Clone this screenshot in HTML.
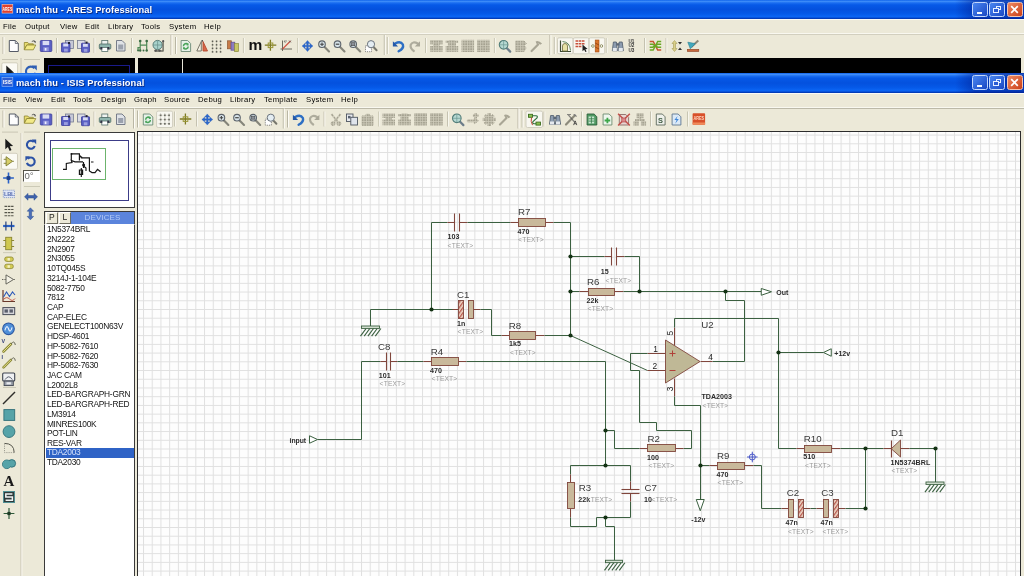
<!DOCTYPE html>
<html><head><meta charset="utf-8"><title>mach thu - ISIS Professional</title>
<style>
html,body{margin:0;padding:0;}
body{width:1024px;height:576px;overflow:hidden;background:#ece9d8;position:relative;font-family:"Liberation Sans",sans-serif;}
.abs{position:absolute;}
.title{position:absolute;left:0;width:1024px;height:19px;background:linear-gradient(to right,rgba(0,20,130,0) 0,rgba(0,20,130,0) 955px,rgba(0,20,130,.45) 975px,rgba(0,20,130,.5) 1024px),linear-gradient(#0c60ea 0%,#3f8ef9 7%,#1b6ef1 15%,#0659e7 26%,#0451de 50%,#0559e8 72%,#0b65f4 87%,#0852da 93%,#0030a6 100%);}
.title .t{position:absolute;left:16px;top:4.6px;font-size:9.3px;font-weight:bold;color:#fff;white-space:nowrap;letter-spacing:0.1px;text-shadow:0.8px 0.8px 0 #0a2a80;}
.menu{position:absolute;left:0;width:1024px;background:#ece9d8;}
.menu span{position:absolute;top:3.2px;font-size:7.7px;letter-spacing:0.28px;color:#000;white-space:nowrap;}
.m1 span{top:2.75px;}
.m2 span{top:2.45px;}
.wb{position:absolute;top:1.8px;width:15.6px;height:15.6px;border:1px solid #c4d8fc;border-radius:2.5px;box-sizing:border-box;}
.list div{position:absolute;left:1.9px;font-size:8.4px;letter-spacing:-0.26px;color:#151515;white-space:nowrap;height:10px;line-height:10px;}
body>*{will-change:transform;}
svg text{font-family:"Liberation Sans",sans-serif;}
</style></head>
<body>
<div class="title" style="top:-0.25px"><span class="t">mach thu - ARES Professional</span><div class="wb" style="left:972.2px;background:linear-gradient(135deg,#4a86f0,#1a48c4)"><i class="abs" style="left:3.4px;top:8.8px;width:5.2px;height:2.2px;background:#f4f8ff"></i></div><div class="wb" style="left:989.4px;background:linear-gradient(135deg,#4a86f0,#1a48c4)"><i class="abs" style="left:5.6px;top:3px;width:5.4px;height:4.6px;border:1px solid #e8f0ff;border-top-width:1.6px;box-sizing:border-box"></i><i class="abs" style="left:3px;top:5.6px;width:5.4px;height:4.6px;border:1px solid #e8f0ff;border-top-width:1.6px;box-sizing:border-box;background:#2a5cd4"></i></div><div class="wb" style="left:1007px;border-color:#f4c4b0;background:linear-gradient(135deg,#ee8a62,#cc4018)"><svg class="abs" style="left:0;top:0" width="13" height="13"><path d="M3.2 3.2 L9.8 9.8 M9.8 3.2 L3.2 9.8" stroke="#fff" stroke-width="1.7"/></svg></div></div>
<div class="menu m1" style="top:18.75px;height:15.25px"><i class="abs" style="left:0;top:0.3px;width:1024px;height:1.1px;background:#fbfaf6"></i>
<span style="left:3px">File</span><span style="left:25px">Output</span><span style="left:60px">View</span><span style="left:85px">Edit</span><span style="left:108px">Library</span><span style="left:141px">Tools</span><span style="left:169px">System</span><span style="left:204px">Help</span>
</div>
<div class="abs" style="left:0;top:32.8px;width:1024px;height:1px;background:#f9f8f0"></div><div class="abs" style="left:0;top:33.8px;width:1024px;height:0.9px;background:#d2cfbf"></div>
<div class="abs" style="left:0;top:58px;width:1021px;height:15px;background:#000"></div>
<div class="abs" style="left:0;top:58px;width:44px;height:15px;background:#ece9d8"></div>
<div class="abs" style="left:134.6px;top:58px;width:3.2px;height:15px;background:#ece9d8"></div>
<div class="abs" style="left:182px;top:59px;width:1px;height:14px;background:#e8e6da"></div>
<div class="abs" style="left:48px;top:65px;width:82px;height:8px;border:1px solid #1a1a8a;border-bottom:none;box-sizing:border-box"></div>
<svg class="abs" style="left:0;top:58px" width="44" height="15" viewBox="0 58 44 15"><rect x="1.8" y="62.8" width="15.8" height="12" rx="1.5" fill="#fbfaf4" stroke="#c9c5b4" stroke-width="0.8"/><g transform="translate(9.5,71.5)"><path d="M-3.2 -6 L-3.2 4.6 L-0.6 2.2 L1.2 6.2 L3 5.4 L1.3 1.5 L4.6 1.3 Z" fill="#1c1c1c"/></g><g transform="translate(30.8,71.2)"><path d="M3.6 -3 A4.8 4.8 0 1 0 4.6 1.6" fill="none" stroke="#2f5fb4" stroke-width="2.1"/><path d="M1 -5.8 H6 V-0.6 Z" fill="#2f5fb4"/></g></svg>
<div class="title" style="top:73px;height:19.75px"><span class="t">mach thu - ISIS Professional</span><div class="wb" style="left:972.2px;background:linear-gradient(135deg,#4a86f0,#1a48c4)"><i class="abs" style="left:3.4px;top:8.8px;width:5.2px;height:2.2px;background:#f4f8ff"></i></div><div class="wb" style="left:989.4px;background:linear-gradient(135deg,#4a86f0,#1a48c4)"><i class="abs" style="left:5.6px;top:3px;width:5.4px;height:4.6px;border:1px solid #e8f0ff;border-top-width:1.6px;box-sizing:border-box"></i><i class="abs" style="left:3px;top:5.6px;width:5.4px;height:4.6px;border:1px solid #e8f0ff;border-top-width:1.6px;box-sizing:border-box;background:#2a5cd4"></i></div><div class="wb" style="left:1007px;border-color:#f4c4b0;background:linear-gradient(135deg,#ee8a62,#cc4018)"><svg class="abs" style="left:0;top:0" width="13" height="13"><path d="M3.2 3.2 L9.8 9.8 M9.8 3.2 L3.2 9.8" stroke="#fff" stroke-width="1.7"/></svg></div></div>
<div class="menu m2" style="top:92.75px;height:15.25px"><i class="abs" style="left:0;top:0.3px;width:1024px;height:1.1px;background:#fbfaf6"></i>
<span style="left:3px">File</span><span style="left:25px">View</span><span style="left:51px">Edit</span><span style="left:73px">Tools</span><span style="left:101px">Design</span><span style="left:134px">Graph</span><span style="left:164px">Source</span><span style="left:198px">Debug</span><span style="left:230px">Library</span><span style="left:264px">Template</span><span style="left:306px">System</span><span style="left:341px">Help</span>
</div>
<div class="abs" style="left:0;top:106.9px;width:1024px;height:1px;background:#f9f8f0"></div><div class="abs" style="left:0;top:107.9px;width:1024px;height:1px;background:#bcb9a8"></div>
<!-- canvas -->
<div class="abs" id="canvas" style="left:137px;top:131px;width:884.2px;height:445px;background-color:#fdfdfd;border-left:1.5px solid #2c2c2c;border-top:1.5px solid #2c2c2c;border-right:1.3px solid #2c2c2c;box-sizing:border-box;overflow:hidden">
<svg class="abs" style="left:-138.5px;top:-132.5px" width="1024" height="576" viewBox="0 0 1024 576">
<defs><pattern id="gridp" x="143" y="134.6" width="8.72" height="8.72" patternUnits="userSpaceOnUse"><path d="M0.5 0 V8.72 M0 0.5 H8.72" stroke="#e0e0e0" stroke-width="1" fill="none"/></pattern></defs>
<rect x="138" y="132" width="883" height="444" fill="url(#gridp)"/>
</svg>
</div>
<!-- overview + device panel -->
<div class="abs" style="left:44px;top:131.5px;width:91px;height:76px;background:#fff;border:1px solid #3a3a3a;box-sizing:border-box"></div>
<div class="abs" style="left:50px;top:139.5px;width:79px;height:61px;border:1px solid #3c3c88;box-sizing:border-box"></div>
<div class="abs" style="left:51.8px;top:147.5px;width:54.2px;height:32px;border:1px solid #6cb46c;box-sizing:border-box"></div>
<div class="abs" style="left:44px;top:210.5px;width:91px;height:14px;background:#ece9d8;border:1px solid #3a3a3a;border-bottom:none;box-sizing:border-box"></div>
<div class="abs" style="left:46px;top:212px;width:11.5px;height:11.5px;background:#ece9d8;border:1px solid #fff;border-right-color:#6e6c60;border-bottom-color:#6e6c60;box-sizing:border-box;font-size:8.5px;line-height:9.5px;text-align:center;color:#222">P</div>
<div class="abs" style="left:58.5px;top:212px;width:11.5px;height:11.5px;background:#ece9d8;border:1px solid #fff;border-right-color:#6e6c60;border-bottom-color:#6e6c60;box-sizing:border-box;font-size:8.5px;line-height:9.5px;text-align:center;color:#222">L</div>
<div class="abs" style="left:71px;top:211.5px;width:63px;height:12.5px;background:#5b84dc;color:#b4cbf6;font-size:8px;line-height:12.5px;text-align:center;letter-spacing:0.1px">DEVICES</div>
<div class="abs list" style="left:44px;top:224px;width:91px;height:353px;background:#fff;border:1px solid #3a3a3a;border-top-color:#fff;box-sizing:border-box"><div style="top:-0.70px">1N5374BRL</div><div style="top:9.01px">2N2222</div><div style="top:18.72px">2N2907</div><div style="top:28.43px">2N3055</div><div style="top:38.14px">10TQ045S</div><div style="top:47.85px">3214J-1-104E</div><div style="top:57.56px">5082-7750</div><div style="top:67.27px">7812</div><div style="top:76.98px">CAP</div><div style="top:86.69px">CAP-ELEC</div><div style="top:96.40px">GENELECT100N63V</div><div style="top:106.11px">HDSP-4601</div><div style="top:115.82px">HP-5082-7610</div><div style="top:125.53px">HP-5082-7620</div><div style="top:135.24px">HP-5082-7630</div><div style="top:144.95px">JAC CAM</div><div style="top:154.66px">L2002L8</div><div style="top:164.37px">LED-BARGRAPH-GRN</div><div style="top:174.08px">LED-BARGRAPH-RED</div><div style="top:183.79px">LM3914</div><div style="top:193.50px">MINRES100K</div><div style="top:203.21px">POT-LIN</div><div style="top:212.92px">RES-VAR</div><div style="left:0.5px;top:223.33px;width:88.6px;height:9.4px;line-height:9.2px;background:#2f63c6;color:#d6e2fb;padding-left:1.4px;box-sizing:border-box">TDA2003</div><div style="top:232.34px">TDA2030</div></div>
<!-- angle box -->
<div class="abs" style="left:22.8px;top:170.4px;width:17.2px;height:11.6px;background:#fff;border:1px solid #55534a;border-right-color:#fff;border-bottom-color:#fff;box-sizing:border-box;font-size:9.6px;line-height:10px;color:#666;padding-left:0.5px">0&deg;</div>
<!-- chrome icons -->
<svg class="abs" style="left:0;top:0" width="1024" height="576" viewBox="0 0 1024 576">
<defs><pattern id="ck" width="2.5" height="2.5" patternUnits="userSpaceOnUse"><rect width="2.5" height="2.5" fill="#a5a291"/><rect x="0" y="0" width="0.7" height="2.5" fill="#cfccbb"/><rect x="0" y="0" width="2.5" height="0.7" fill="#cfccbb"/></pattern></defs>
<rect x="2.5" y="37" width="1" height="17" fill="#b9b6a4"/><rect x="3.5" y="37" width="1" height="17" fill="#fdfcf6"/>
<g transform="translate(8.80,40.00)"><path d="M0.5 0.5 H6.5 L9.5 3.5 V11.5 H0.5 Z" fill="#fdfdfd" stroke="#555a66" stroke-width="1"/><path d="M6.5 0.5 V3.5 H9.5" fill="none" stroke="#555a66" stroke-width="0.8"/></g>
<g transform="translate(23.80,40.00)"><path d="M0.5 2.5 H4 L5 3.8 H9.5 V5 H3 L0.5 9.5 Z" fill="#e9dd72" stroke="#8d8430" stroke-width="0.8"/><path d="M3 5 H12 L9.5 9.8 H0.5 Z" fill="#f2e987" stroke="#8d8430" stroke-width="0.8"/><path d="M8 1.5 Q10 0 11.5 1.5 M11.5 1.5 l-1.6 -0.2 M11.5 1.5 l-0.2 1.6" stroke="#444" stroke-width="0.8" fill="none"/></g>
<g transform="translate(39.80,40.00)"><rect x="0.5" y="0.5" width="11.5" height="11" rx="0.8" fill="#5a5fc4" stroke="#3d3f9a" stroke-width="0.8"/><rect x="2.8" y="0.9" width="6.6" height="4.2" fill="#d9dcf3"/><rect x="3.5" y="7.2" width="5.5" height="4" fill="#8f93dc"/><rect x="5" y="8" width="1.6" height="2.6" fill="#eef"/></g>
<g transform="translate(61.00,40.00)"><rect x="4.5" y="0.5" width="8" height="8" fill="#c7c9d6" stroke="#777c92" stroke-width="0.8"/><rect x="0.5" y="3" width="8.5" height="9" rx="0.6" fill="#5a5fc4" stroke="#3d3f9a" stroke-width="0.8"/><rect x="2.2" y="3.5" width="5" height="3" fill="#d9dcf3"/><rect x="3" y="8.6" width="3.8" height="3" fill="#9a9ee0"/><rect x="7" y="2" width="2" height="2" fill="#223"/></g>
<g transform="translate(77.00,40.00)"><rect x="0.5" y="0.5" width="7.5" height="8" fill="#dcdde6" stroke="#777c92" stroke-width="0.8"/><rect x="4.5" y="3.2" width="8" height="9" rx="0.6" fill="#5a5fc4" stroke="#3d3f9a" stroke-width="0.8"/><rect x="6" y="3.8" width="4.8" height="3" fill="#d9dcf3"/><rect x="6.8" y="8.8" width="3.6" height="3" fill="#9a9ee0"/><rect x="8.6" y="1.6" width="2" height="2" fill="#223"/></g>
<g transform="translate(98.80,40.00)"><rect x="3" y="0.5" width="6" height="4" fill="#eef3f1" stroke="#55706c" stroke-width="0.8"/><rect x="0.5" y="4" width="11.5" height="5" rx="1" fill="#8fb5ae" stroke="#4c6b66" stroke-width="0.8"/><rect x="3" y="7.5" width="6" height="4" fill="#fff" stroke="#55706c" stroke-width="0.8"/><rect x="1.5" y="7" width="2" height="2.4" fill="#334"/><rect x="8.6" y="7" width="2" height="2.4" fill="#334"/></g>
<g transform="translate(116.00,40.00)"><path d="M0.5 0.5 H6 L9 3.5 V11 H0.5 Z" fill="#dfe2e6" stroke="#6c7280" stroke-width="0.9"/><rect x="2.2" y="4.5" width="5" height="5" fill="#9ba1ad"/></g>
<rect x="56.0" y="38" width="1" height="15" fill="#c5c2b0"/><rect x="57.0" y="38" width="0.8" height="15" fill="#fbfaf4"/>
<rect x="93.5" y="38" width="1" height="15" fill="#c5c2b0"/><rect x="94.5" y="38" width="0.8" height="15" fill="#fbfaf4"/>
<rect x="131.0" y="38" width="1" height="15" fill="#c5c2b0"/><rect x="132.0" y="38" width="0.8" height="15" fill="#fbfaf4"/>
<g transform="translate(137.20,39.70)"><g stroke="#4e8a55" stroke-width="1.2" fill="none"><path d="M3 1 V11 M9.5 1 V11 M3 5.5 H9.5 M0.8 11 V8 H3"/></g><g fill="#3c6c44"><circle cx="3" cy="1.3" r="1.3"/><circle cx="9.5" cy="1.3" r="1.3"/><circle cx="3" cy="10.8" r="1.2"/><circle cx="9.5" cy="10.8" r="1.2"/><circle cx="0.9" cy="10.8" r="1"/><circle cx="6.3" cy="10.8" r="1"/></g></g>
<g transform="translate(152.60,40.00)"><circle cx="5" cy="5" r="4.6" fill="#a8d2cc" stroke="#557a76" stroke-width="1"/><path d="M5 0.5 V9.5 M0.5 5 H9.5" stroke="#6d958f" stroke-width="0.8"/><path d="M10.5 1 V11 M2 11 H11" stroke="#6a6a60" stroke-width="1.4"/><circle cx="3" cy="10.6" r="1.2" fill="#555"/><circle cx="7" cy="10.6" r="1.2" fill="#555"/><circle cx="10.6" cy="1.2" r="1.1" fill="#555"/></g>
<rect x="170.5" y="35" width="1" height="20" fill="#b9b6a4"/><rect x="171.5" y="35" width="1" height="20" fill="#fdfcf6"/>
<rect x="175" y="37" width="1" height="17" fill="#b9b6a4"/><rect x="176" y="37" width="1" height="17" fill="#fdfcf6"/>
<g transform="translate(180.60,40.00)"><path d="M0.5 0.5 H7 L10 3.5 V11.5 H0.5 Z" fill="#e6f1e8" stroke="#6c8a76" stroke-width="0.9"/><path d="M2.8 6.2 A2.6 2.6 0 0 1 7.4 4.6 M7.6 6.4 A2.6 2.6 0 0 1 3 8" stroke="#49a45a" stroke-width="1.5" fill="none"/><path d="M7.9 3.2 V5.4 H5.8 Z M2.4 9.4 V7.2 H4.6 Z" fill="#49a45a"/></g>
<g transform="translate(196.00,40.00)"><path d="M5.3 1.5 V11 H0.8 Z" fill="#f4f1e4" stroke="#6d6a5c" stroke-width="0.9"/><path d="M7 1.5 V11 H11.5 Z" fill="#d8684a" stroke="#b4492f" stroke-width="0.9"/><rect x="5.6" y="0" width="1.2" height="1.6" fill="#333"/></g>
<g transform="translate(211.50,40.00)"><rect x="0.30000000000000004" y="0.6000000000000001" width="1.5" height="1.5" fill="#4d4d46"/><rect x="0.30000000000000004" y="4.1" width="1.5" height="1.5" fill="#4d4d46"/><rect x="0.30000000000000004" y="7.6000000000000005" width="1.5" height="1.5" fill="#4d4d46"/><rect x="0.30000000000000004" y="11.100000000000001" width="1.5" height="1.5" fill="#4d4d46"/><rect x="4.3" y="0.6000000000000001" width="1.5" height="1.5" fill="#4d4d46"/><rect x="4.3" y="4.1" width="1.5" height="1.5" fill="#4d4d46"/><rect x="4.3" y="7.6000000000000005" width="1.5" height="1.5" fill="#4d4d46"/><rect x="4.3" y="11.100000000000001" width="1.5" height="1.5" fill="#4d4d46"/><rect x="8.3" y="0.6000000000000001" width="1.5" height="1.5" fill="#4d4d46"/><rect x="8.3" y="4.1" width="1.5" height="1.5" fill="#4d4d46"/><rect x="8.3" y="7.6000000000000005" width="1.5" height="1.5" fill="#4d4d46"/><rect x="8.3" y="11.100000000000001" width="1.5" height="1.5" fill="#4d4d46"/><path d="M1 0.5 V12 M5 0.5 V12 M9 0.5 V12" stroke="#8a887a" stroke-width="0.5" stroke-dasharray="1 1"/></g>
<g transform="translate(227.00,40.00)"><rect x="0.5" y="0.8" width="3.8" height="8" fill="#c87c48" stroke="#8d5630" stroke-width="0.7"/><rect x="4" y="2.2" width="3.8" height="8" fill="#8d7cc0" stroke="#5d4f90" stroke-width="0.7"/><rect x="7.6" y="3.6" width="3.8" height="8" fill="#c9c764" stroke="#8b8a3c" stroke-width="0.7"/></g>
<rect x="242.9" y="38" width="1" height="15" fill="#c5c2b0"/><rect x="243.9" y="38" width="0.8" height="15" fill="#fbfaf4"/>
<g transform="translate(249.00,40.00)"><text x="-0.5" y="9.7" font-size="15.5" font-weight="bold" fill="#111">m</text></g>
<g transform="translate(264.80,39.20)"><path d="M5.6 0.5 V11.5 M0 6 H11.5" stroke="#7d7a22" stroke-width="1.3"/><rect x="3.4" y="3.8" width="4.6" height="4.6" fill="none" stroke="#9a9636" stroke-width="1"/></g>
<g transform="translate(280.00,40.00)"><path d="M2.5 0.5 V11 M0.5 9 H12" stroke="#5c5a50" stroke-width="0.9"/><path d="M2.5 9 L10.5 1" stroke="#d05040" stroke-width="1.1"/><path d="M4 1 h3 M4 1 l1.5 2 M9 0.5 l2 2 M11 0.5 l-2 2" stroke="#555" stroke-width="0.6"/></g>
<rect x="297.3" y="38" width="1" height="15" fill="#c5c2b0"/><rect x="298.3" y="38" width="0.8" height="15" fill="#fbfaf4"/>
<g transform="translate(302.00,40.20)"><path d="M5.5 0.2 L8.1 3.3 H6.3 V5 H8 V3.2 L11 5.8 L8 8.4 V6.6 H6.3 V8.3 H8.1 L5.5 11.4 L2.9 8.3 H4.7 V6.6 H3 V8.4 L0 5.8 L3 3.2 V5 H4.7 V3.3 H2.9 Z" fill="#2c68cc" stroke="#2457b0" stroke-width="0.3"/></g>
<g transform="translate(318.00,40.20)"><path d="M6.6 6.8 L11 11.2" stroke="#85857a" stroke-width="2.1" stroke-linecap="round"/><circle cx="4" cy="4" r="3.3" fill="#d7e4ea" stroke="#5c636b" stroke-width="1.1"/><path d="M2.2 4 H5.8 M4 2.2 V5.8" stroke="#444" stroke-width="1.1"/></g>
<g transform="translate(333.50,40.20)"><path d="M6.6 6.8 L11 11.2" stroke="#85857a" stroke-width="2.1" stroke-linecap="round"/><circle cx="4" cy="4" r="3.3" fill="#d7e4ea" stroke="#5c636b" stroke-width="1.1"/><path d="M2.2 4 H5.8" stroke="#444" stroke-width="1.2"/></g>
<g transform="translate(349.20,40.20)"><path d="M6.6 6.8 L11 11.2" stroke="#85857a" stroke-width="2.1" stroke-linecap="round"/><circle cx="4" cy="4" r="3.3" fill="#d7e4ea" stroke="#5c636b" stroke-width="1.1"/><rect x="2.3" y="2.5" width="3.4" height="3" fill="#8a8f98" stroke="#444" stroke-width="0.6"/></g>
<g transform="translate(365.00,40.20)"><rect x="0.5" y="5.5" width="6" height="6" fill="#fff" stroke="#555" stroke-width="0.7" stroke-dasharray="1.2 1"/><path d="M8.5 6.8 L11.6 10" stroke="#77776c" stroke-width="2" stroke-linecap="round"/><circle cx="6" cy="4" r="3.6" fill="#e4edf2" stroke="#6b737c" stroke-width="1"/></g>
<rect x="383.8" y="35" width="1" height="20" fill="#b9b6a4"/><rect x="384.8" y="35" width="1" height="20" fill="#fdfcf6"/>
<rect x="386.8" y="37" width="1" height="17" fill="#b9b6a4"/><rect x="387.8" y="37" width="1" height="17" fill="#fdfcf6"/>
<g transform="translate(392.60,40.00)"><path d="M2.5 3.5 Q8 0.5 10.3 4.5 Q11.5 8.5 6 11.3" fill="none" stroke="#2e6fc4" stroke-width="2.4" stroke-linecap="round"/><path d="M0.3 1.2 V6.4 H5.5 Z" fill="#2559a8"/></g>
<g transform="translate(409.20,40.00)"><path d="M8.5 3.5 Q3.5 0.8 1.5 4.8 Q0.8 8.4 4.6 11" fill="none" stroke="#aeac9d" stroke-width="2.2" stroke-linecap="round"/><path d="M10.8 1.2 V6.4 H5.6 Z" fill="#a9a798"/></g>
<rect x="425.1" y="38" width="1" height="15" fill="#c5c2b0"/><rect x="426.1" y="38" width="0.8" height="15" fill="#fbfaf4"/>
<g transform="translate(430.60,40.00)"><g fill="url(#ck)" stroke="url(#ck)"><rect x="0" y="0.5" width="11.5" height="3.4"/><rect x="3" y="3.9" width="5.5" height="2.6"/><rect x="0" y="6.5" width="11.5" height="4.8"/></g></g>
<g transform="translate(446.20,40.00)"><g fill="url(#ck)" stroke="url(#ck)"><rect x="3.2" y="0.5" width="5" height="3"/><rect x="0" y="1" width="3.2" height="1.5"/><rect x="8.2" y="1" width="3.2" height="1.5"/><rect x="2.2" y="3.5" width="7" height="3"/><rect x="0" y="6.5" width="11.5" height="4.8"/></g></g>
<g transform="translate(462.00,40.00)"><g fill="url(#ck)" stroke="url(#ck)"><rect x="0" y="0.3" width="11.6" height="11.2"/></g></g>
<g transform="translate(477.50,40.00)"><g fill="url(#ck)" stroke="url(#ck)"><rect x="0" y="0.3" width="11.6" height="11.2"/></g></g>
<rect x="493.9" y="38" width="1" height="15" fill="#c5c2b0"/><rect x="494.9" y="38" width="0.8" height="15" fill="#fbfaf4"/>
<g transform="translate(498.80,40.00)"><path d="M7.6 7.8 L11.4 11.6" stroke="#6c7d8a" stroke-width="2.2" stroke-linecap="round"/><circle cx="4.8" cy="4.8" r="4.3" fill="#b6d8d2" stroke="#4f7b77" stroke-width="1.1"/><path d="M4.8 0.6 V9 M0.6 4.8 H9" stroke="#6a9a94" stroke-width="0.7"/></g>
<g transform="translate(515.00,40.00)"><g fill="url(#ck)" stroke="url(#ck)"><path d="M0.5 1 H9 L11.5 3.5 L9.5 5.5 L11 8 L9 11.5 H0.5 Z"/></g></g>
<g transform="translate(530.60,40.00)"><path d="M1 11 L7.5 4.5" stroke="#a9a695" stroke-width="2.2" stroke-linecap="round"/><path d="M5 1.5 Q8 0 11.5 3.6 L9.5 4.8 L7.8 3.2 L6.3 4.6 Z" fill="#a9a695"/></g>
<rect x="549.4" y="35" width="1" height="20" fill="#b9b6a4"/><rect x="550.4" y="35" width="1" height="20" fill="#fdfcf6"/>
<rect x="553.8" y="37" width="1" height="17" fill="#b9b6a4"/><rect x="554.8" y="37" width="1" height="17" fill="#fdfcf6"/>
<rect x="557.5" y="37.8" width="15.5" height="16" rx="1.5" fill="#f8f7f0" stroke="#c8c5b6" stroke-width="0.8"/>
<rect x="573.3" y="37.8" width="15.5" height="16" rx="1.5" fill="#f8f7f0" stroke="#c8c5b6" stroke-width="0.8"/>
<rect x="589.2" y="37.8" width="15.5" height="16" rx="1.5" fill="#f8f7f0" stroke="#c8c5b6" stroke-width="0.8"/>
<g transform="translate(559.50,40.00)"><path d="M1 0.5 V11.5 H11.5" stroke="#3d4a32" stroke-width="1.2" fill="none"/><path d="M3 11 V6 Q3 3.5 5.5 3.5 Q8 3.5 8 6 V11 Z" fill="#e8e3a8" stroke="#6c6a3a" stroke-width="0.8"/><path d="M3 1.5 Q10.5 2 11 10.5" stroke="#4e7a4e" stroke-width="0.9" fill="none"/></g>
<g transform="translate(575.00,39.50)"><path d="M0.5 1.5 H9.5 M0.5 4.3 H9.5 M0.5 7 H7" stroke="#c8503a" stroke-width="1.5" stroke-dasharray="2.6 0.6"/><path d="M7.5 5 L7.5 11.8 L9.2 10.2 L10.4 12.6 L11.6 12 L10.4 9.7 L12.6 9.6 Z" fill="#222"/></g>
<g transform="translate(591.40,40.00)"><rect x="3.8" y="0" width="3.8" height="12" fill="#d8742c" stroke="#a44f16" stroke-width="0.6"/><path d="M3.8 3 L7.6 5 M3.8 7 L7.6 9" stroke="#8d3f10" stroke-width="0.8"/><circle cx="1.5" cy="6" r="1.3" fill="#fff" stroke="#7a7a44" stroke-width="0.8"/><circle cx="10" cy="6" r="1.3" fill="#fff" stroke="#7a7a44" stroke-width="0.8"/></g>
<rect x="605.8" y="38" width="1" height="15" fill="#c5c2b0"/><rect x="606.8" y="38" width="0.8" height="15" fill="#fbfaf4"/>
<g transform="translate(611.80,40.00)"><g fill="#8d9db0" stroke="#4e5b6b" stroke-width="0.8"><path d="M1.6 2 H4.6 L5.6 10.8 H0.5 Z"/><path d="M7.4 2 H10.4 L11.6 10.8 H6.4 Z"/></g><rect x="1" y="8" width="4" height="3" fill="#e5e9ee"/><rect x="7" y="8" width="4" height="3" fill="#e5e9ee"/><rect x="4.6" y="3.2" width="2.8" height="2.4" fill="#5b6878"/></g>
<g transform="translate(628.50,39.60)"><text font-size="4.6" font-weight="bold" fill="#333"><tspan x="0" y="3.6">U1</tspan><tspan x="0" y="7.8">U2</tspan><tspan x="0" y="12">U3</tspan></text></g>
<rect x="644.0" y="38" width="1" height="15" fill="#c5c2b0"/><rect x="645.0" y="38" width="0.8" height="15" fill="#fbfaf4"/>
<g transform="translate(649.20,40.00)"><path d="M0.5 1.5 H4 L8.5 10 H12" stroke="#c4562e" stroke-width="1.5" fill="none"/><path d="M0.5 10 H4 L8.5 1.5 H12 M0.5 4.3 H3.5 L8.5 7.2 H12 M0.5 7.2 H3.5 L8.5 4.3 H12" stroke="#6aa624" stroke-width="1.4" fill="none"/></g>
<rect x="665.5" y="38" width="1" height="15" fill="#c5c2b0"/><rect x="666.5" y="38" width="0.8" height="15" fill="#fbfaf4"/>
<g transform="translate(671.00,40.00)"><path d="M3.5 0.5 L6 3.5 H4.5 V8.5 H6 L3.5 11.5 L1 8.5 H2.5 V3.5 H1 Z" fill="#d9cf8a" stroke="#a49a56" stroke-width="0.6"/><path d="M7 2 L11 2 L9 4.6 Z M7 10 L11 10 L9 7.4 Z" fill="#333"/></g>
<g transform="translate(686.80,40.00)"><path d="M11.5 0.5 L4.5 7" stroke="#8c8878" stroke-width="2"/><path d="M1 2.2 L8.5 3.6 L3.5 8.8 Z" fill="#43a9bd" stroke="#2b7f92" stroke-width="0.6"/><rect x="0.5" y="9.3" width="11.5" height="2.2" fill="#c8683e" stroke="#8d4424" stroke-width="0.6"/></g>
<rect x="2.5" y="110.5" width="1" height="17" fill="#b9b6a4"/><rect x="3.5" y="110.5" width="1" height="17" fill="#fdfcf6"/>
<g transform="translate(8.80,113.50)"><path d="M0.5 0.5 H6.5 L9.5 3.5 V11.5 H0.5 Z" fill="#fdfdfd" stroke="#555a66" stroke-width="1"/><path d="M6.5 0.5 V3.5 H9.5" fill="none" stroke="#555a66" stroke-width="0.8"/></g>
<g transform="translate(23.80,113.50)"><path d="M0.5 2.5 H4 L5 3.8 H9.5 V5 H3 L0.5 9.5 Z" fill="#e9dd72" stroke="#8d8430" stroke-width="0.8"/><path d="M3 5 H12 L9.5 9.8 H0.5 Z" fill="#f2e987" stroke="#8d8430" stroke-width="0.8"/><path d="M8 1.5 Q10 0 11.5 1.5 M11.5 1.5 l-1.6 -0.2 M11.5 1.5 l-0.2 1.6" stroke="#444" stroke-width="0.8" fill="none"/></g>
<g transform="translate(39.80,113.50)"><rect x="0.5" y="0.5" width="11.5" height="11" rx="0.8" fill="#5a5fc4" stroke="#3d3f9a" stroke-width="0.8"/><rect x="2.8" y="0.9" width="6.6" height="4.2" fill="#d9dcf3"/><rect x="3.5" y="7.2" width="5.5" height="4" fill="#8f93dc"/><rect x="5" y="8" width="1.6" height="2.6" fill="#eef"/></g>
<g transform="translate(61.00,113.50)"><rect x="4.5" y="0.5" width="8" height="8" fill="#c7c9d6" stroke="#777c92" stroke-width="0.8"/><rect x="0.5" y="3" width="8.5" height="9" rx="0.6" fill="#5a5fc4" stroke="#3d3f9a" stroke-width="0.8"/><rect x="2.2" y="3.5" width="5" height="3" fill="#d9dcf3"/><rect x="3" y="8.6" width="3.8" height="3" fill="#9a9ee0"/><rect x="7" y="2" width="2" height="2" fill="#223"/></g>
<g transform="translate(77.00,113.50)"><rect x="0.5" y="0.5" width="7.5" height="8" fill="#dcdde6" stroke="#777c92" stroke-width="0.8"/><rect x="4.5" y="3.2" width="8" height="9" rx="0.6" fill="#5a5fc4" stroke="#3d3f9a" stroke-width="0.8"/><rect x="6" y="3.8" width="4.8" height="3" fill="#d9dcf3"/><rect x="6.8" y="8.8" width="3.6" height="3" fill="#9a9ee0"/><rect x="8.6" y="1.6" width="2" height="2" fill="#223"/></g>
<g transform="translate(98.80,113.50)"><rect x="3" y="0.5" width="6" height="4" fill="#eef3f1" stroke="#55706c" stroke-width="0.8"/><rect x="0.5" y="4" width="11.5" height="5" rx="1" fill="#8fb5ae" stroke="#4c6b66" stroke-width="0.8"/><rect x="3" y="7.5" width="6" height="4" fill="#fff" stroke="#55706c" stroke-width="0.8"/><rect x="1.5" y="7" width="2" height="2.4" fill="#334"/><rect x="8.6" y="7" width="2" height="2.4" fill="#334"/></g>
<g transform="translate(116.00,113.50)"><path d="M0.5 0.5 H6 L9 3.5 V11 H0.5 Z" fill="#dfe2e6" stroke="#6c7280" stroke-width="0.9"/><rect x="2.2" y="4.5" width="5" height="5" fill="#9ba1ad"/></g>
<rect x="56.0" y="111.5" width="1" height="15" fill="#c5c2b0"/><rect x="57.0" y="111.5" width="0.8" height="15" fill="#fbfaf4"/>
<rect x="93.5" y="111.5" width="1" height="15" fill="#c5c2b0"/><rect x="94.5" y="111.5" width="0.8" height="15" fill="#fbfaf4"/>
<rect x="133" y="108.5" width="1" height="20" fill="#b9b6a4"/><rect x="134" y="108.5" width="1" height="20" fill="#fdfcf6"/>
<rect x="137" y="110.5" width="1" height="17" fill="#b9b6a4"/><rect x="138" y="110.5" width="1" height="17" fill="#fdfcf6"/>
<g transform="translate(142.80,113.50)"><path d="M0.5 0.5 H7 L10 3.5 V11.5 H0.5 Z" fill="#e6f1e8" stroke="#6c8a76" stroke-width="0.9"/><path d="M2.8 6.2 A2.6 2.6 0 0 1 7.4 4.6 M7.6 6.4 A2.6 2.6 0 0 1 3 8" stroke="#49a45a" stroke-width="1.5" fill="none"/><path d="M7.9 3.2 V5.4 H5.8 Z M2.4 9.4 V7.2 H4.6 Z" fill="#49a45a"/></g>
<rect x="156.6" y="111.1" width="16" height="16.4" rx="1.5" fill="#f8f7f0" stroke="#c8c5b6" stroke-width="0.8"/>
<g transform="translate(158.60,113.30)"><rect x="1.2" y="1.2" width="1.7" height="1.7" fill="#55554d"/><rect x="1.2" y="5.4" width="1.7" height="1.7" fill="#55554d"/><rect x="1.2" y="9.6" width="1.7" height="1.7" fill="#55554d"/><rect x="5.4" y="1.2" width="1.7" height="1.7" fill="#55554d"/><rect x="5.4" y="5.4" width="1.7" height="1.7" fill="#55554d"/><rect x="5.4" y="9.6" width="1.7" height="1.7" fill="#55554d"/><rect x="9.6" y="1.2" width="1.7" height="1.7" fill="#55554d"/><rect x="9.6" y="5.4" width="1.7" height="1.7" fill="#55554d"/><rect x="9.6" y="9.6" width="1.7" height="1.7" fill="#55554d"/><path d="M2 0 V12 M6.2 0 V12 M10.4 0 V12 M0 2 H12 M0 6.2 H12 M0 10.4 H12" stroke="#9a988c" stroke-width="0.5" stroke-dasharray="1 1"/></g>
<rect x="174.1" y="111.5" width="1" height="15" fill="#c5c2b0"/><rect x="175.1" y="111.5" width="0.8" height="15" fill="#fbfaf4"/>
<g transform="translate(179.80,113.00)"><path d="M5.6 0.5 V11.5 M0 6 H11.5" stroke="#7d7a22" stroke-width="1.3"/><rect x="3.4" y="3.8" width="4.6" height="4.6" fill="none" stroke="#9a9636" stroke-width="1"/></g>
<rect x="196.0" y="111.5" width="1" height="15" fill="#c5c2b0"/><rect x="197.0" y="111.5" width="0.8" height="15" fill="#fbfaf4"/>
<g transform="translate(201.80,113.70)"><path d="M5.5 0.2 L8.1 3.3 H6.3 V5 H8 V3.2 L11 5.8 L8 8.4 V6.6 H6.3 V8.3 H8.1 L5.5 11.4 L2.9 8.3 H4.7 V6.6 H3 V8.4 L0 5.8 L3 3.2 V5 H4.7 V3.3 H2.9 Z" fill="#2c68cc" stroke="#2457b0" stroke-width="0.3"/></g>
<g transform="translate(217.40,113.70)"><path d="M6.6 6.8 L11 11.2" stroke="#85857a" stroke-width="2.1" stroke-linecap="round"/><circle cx="4" cy="4" r="3.3" fill="#d7e4ea" stroke="#5c636b" stroke-width="1.1"/><path d="M2.2 4 H5.8 M4 2.2 V5.8" stroke="#444" stroke-width="1.1"/></g>
<g transform="translate(233.00,113.70)"><path d="M6.6 6.8 L11 11.2" stroke="#85857a" stroke-width="2.1" stroke-linecap="round"/><circle cx="4" cy="4" r="3.3" fill="#d7e4ea" stroke="#5c636b" stroke-width="1.1"/><path d="M2.2 4 H5.8" stroke="#444" stroke-width="1.2"/></g>
<g transform="translate(249.20,113.70)"><path d="M6.6 6.8 L11 11.2" stroke="#85857a" stroke-width="2.1" stroke-linecap="round"/><circle cx="4" cy="4" r="3.3" fill="#d7e4ea" stroke="#5c636b" stroke-width="1.1"/><rect x="2.3" y="2.5" width="3.4" height="3" fill="#8a8f98" stroke="#444" stroke-width="0.6"/></g>
<g transform="translate(264.80,113.70)"><rect x="0.5" y="5.5" width="6" height="6" fill="#fff" stroke="#555" stroke-width="0.7" stroke-dasharray="1.2 1"/><path d="M8.5 6.8 L11.6 10" stroke="#77776c" stroke-width="2" stroke-linecap="round"/><circle cx="6" cy="4" r="3.6" fill="#e4edf2" stroke="#6b737c" stroke-width="1"/></g>
<rect x="282.8" y="108.5" width="1" height="20" fill="#b9b6a4"/><rect x="283.8" y="108.5" width="1" height="20" fill="#fdfcf6"/>
<rect x="287" y="110.5" width="1" height="17" fill="#b9b6a4"/><rect x="288" y="110.5" width="1" height="17" fill="#fdfcf6"/>
<g transform="translate(292.60,113.50)"><path d="M2.5 3.5 Q8 0.5 10.3 4.5 Q11.5 8.5 6 11.3" fill="none" stroke="#2e6fc4" stroke-width="2.4" stroke-linecap="round"/><path d="M0.3 1.2 V6.4 H5.5 Z" fill="#2559a8"/></g>
<g transform="translate(308.60,113.50)"><path d="M8.5 3.5 Q3.5 0.8 1.5 4.8 Q0.8 8.4 4.6 11" fill="none" stroke="#aeac9d" stroke-width="2.2" stroke-linecap="round"/><path d="M10.8 1.2 V6.4 H5.6 Z" fill="#a9a798"/></g>
<rect x="323.5" y="111.5" width="1" height="15" fill="#c5c2b0"/><rect x="324.5" y="111.5" width="0.8" height="15" fill="#fbfaf4"/>
<g transform="translate(330.50,113.50)"><g fill="url(#ck)" stroke="url(#ck)"><path d="M1 0.5 L7.5 9 M10 0.5 L3.5 9" stroke-width="2" fill="none"/><circle cx="2.6" cy="10" r="2"/><circle cx="8.4" cy="10" r="2"/></g></g>
<g transform="translate(346.00,113.50)"><rect x="0.5" y="0.5" width="6.5" height="7.5" fill="#e8eaee" stroke="#4e5560" stroke-width="0.9"/><rect x="4.8" y="3.8" width="6.7" height="7.7" fill="#dfe4ec" stroke="#4e5560" stroke-width="0.9"/><rect x="2" y="2.4" width="2.5" height="2.5" fill="#59616e"/></g>
<g transform="translate(361.00,113.50)"><g fill="url(#ck)" stroke="url(#ck)"><path d="M1 2.5 H5 V0.8 H8.5 V2.5 H12 V11.8 H1 Z"/></g></g>
<rect x="378.3" y="111.5" width="1" height="15" fill="#c5c2b0"/><rect x="379.3" y="111.5" width="0.8" height="15" fill="#fbfaf4"/>
<g transform="translate(383.00,113.50)"><g fill="url(#ck)" stroke="url(#ck)"><rect x="0" y="0.5" width="11.5" height="3.4"/><rect x="3" y="3.9" width="5.5" height="2.6"/><rect x="0" y="6.5" width="11.5" height="4.8"/></g></g>
<g transform="translate(398.80,113.50)"><g fill="url(#ck)" stroke="url(#ck)"><rect x="3.2" y="0.5" width="5" height="3"/><rect x="0" y="1" width="3.2" height="1.5"/><rect x="8.2" y="1" width="3.2" height="1.5"/><rect x="2.2" y="3.5" width="7" height="3"/><rect x="0" y="6.5" width="11.5" height="4.8"/></g></g>
<g transform="translate(414.80,113.50)"><g fill="url(#ck)" stroke="url(#ck)"><rect x="0" y="0.3" width="11.6" height="11.2"/></g></g>
<g transform="translate(430.60,113.50)"><g fill="url(#ck)" stroke="url(#ck)"><rect x="0" y="0.3" width="11.6" height="11.2"/></g></g>
<rect x="447.0" y="111.5" width="1" height="15" fill="#c5c2b0"/><rect x="448.0" y="111.5" width="0.8" height="15" fill="#fbfaf4"/>
<g transform="translate(452.00,113.50)"><path d="M7.6 7.8 L11.4 11.6" stroke="#6c7d8a" stroke-width="2.2" stroke-linecap="round"/><circle cx="4.8" cy="4.8" r="4.3" fill="#b6d8d2" stroke="#4f7b77" stroke-width="1.1"/><path d="M4.8 0.6 V9 M0.6 4.8 H9" stroke="#6a9a94" stroke-width="0.7"/></g>
<g transform="translate(467.40,113.50)"><g fill="url(#ck)" stroke="url(#ck)"><path d="M0 6.5 H7 V4.5 L11 7.3 L7 10.2 V8.3 H0 Z"/><rect x="7.6" y="0" width="1.5" height="4.6"/><rect x="6" y="1.5" width="4.7" height="1.5"/></g></g>
<g transform="translate(483.20,113.50)"><g fill="url(#ck)" stroke="url(#ck)"><circle cx="6" cy="6" r="4.2"/><rect x="4.8" y="0" width="2.4" height="12"/><rect x="0" y="4.8" width="12" height="2.4"/><path d="M1.2 2.6 L2.8 1 L11 9.4 L9.4 11 Z M9.4 1 L11 2.6 L2.6 11 L1 9.4 Z"/></g></g>
<g transform="translate(499.00,113.50)"><path d="M1 11 L7.5 4.5" stroke="#a9a695" stroke-width="2.2" stroke-linecap="round"/><path d="M5 1.5 Q8 0 11.5 3.6 L9.5 4.8 L7.8 3.2 L6.3 4.6 Z" fill="#a9a695"/></g>
<rect x="517.5" y="108.5" width="1" height="20" fill="#b9b6a4"/><rect x="518.5" y="108.5" width="1" height="20" fill="#fdfcf6"/>
<rect x="521.6" y="110.5" width="1" height="17" fill="#b9b6a4"/><rect x="522.6" y="110.5" width="1" height="17" fill="#fdfcf6"/>
<rect x="526" y="111.1" width="16.5" height="16.4" rx="1.5" fill="#f8f7f0" stroke="#c8c5b6" stroke-width="0.8"/>
<g transform="translate(528.00,113.50)"><rect x="0.5" y="0.8" width="4" height="3" fill="#8cc152" stroke="#3c6c1e" stroke-width="0.9"/><rect x="8" y="8.6" width="4.5" height="3" fill="#8cc152" stroke="#3c6c1e" stroke-width="0.9"/><path d="M4.5 2.3 H8 Q10 2.3 9 4.5 L5 8 Q4 10 6 10.2 H8" fill="none" stroke="#2d6f3a" stroke-width="1.1"/><path d="M3.5 4 Q2.4 8 4.5 11.6" fill="none" stroke="#c0483a" stroke-width="1"/></g>
<rect x="543.5" y="111.5" width="1" height="15" fill="#c5c2b0"/><rect x="544.5" y="111.5" width="0.8" height="15" fill="#fbfaf4"/>
<g transform="translate(549.00,113.50)"><g fill="#8d9db0" stroke="#4e5b6b" stroke-width="0.8"><path d="M1.6 2 H4.6 L5.6 10.8 H0.5 Z"/><path d="M7.4 2 H10.4 L11.6 10.8 H6.4 Z"/></g><rect x="1" y="8" width="4" height="3" fill="#e5e9ee"/><rect x="7" y="8" width="4" height="3" fill="#e5e9ee"/><rect x="4.6" y="3.2" width="2.8" height="2.4" fill="#5b6878"/></g>
<g transform="translate(565.00,113.50)"><path d="M1 11 L9.5 2.2" stroke="#8d8b7c" stroke-width="2.2" stroke-linecap="round"/><path d="M8.2 0.6 Q11.5 0.4 11.8 3.6 L9.8 2.6 Z" fill="#777"/><path d="M2 1 H6 M3 1 L9.5 8.5" stroke="#555a" stroke-width="1.2"/><path d="M8.6 11.6 L10.2 7.4 L11.8 11.6 M9.2 10.2 H11.2" stroke="#333" stroke-width="0.8" fill="none"/></g>
<rect x="581.1" y="111.5" width="1" height="15" fill="#c5c2b0"/><rect x="582.1" y="111.5" width="0.8" height="15" fill="#fbfaf4"/>
<g transform="translate(586.60,113.50)"><path d="M0.5 0.5 H7.5 L10.2 3.2 V11.5 H0.5 Z" fill="#4f9a62" stroke="#2a5f3a" stroke-width="0.9"/><rect x="2" y="3" width="5.6" height="7" fill="#c8e6cf"/><path d="M2 5.3 H7.6 M2 7.6 H7.6 M4.8 3 V10" stroke="#2f7a44" stroke-width="0.8"/></g>
<g transform="translate(602.60,113.50)"><path d="M0.5 0.5 H6.5 L9.3 3.3 V11.5 H0.5 Z" fill="#eef6ee" stroke="#6d8b70" stroke-width="0.9"/><path d="M2 7 H7.6 M4.8 4.2 V9.8" stroke="#3da64a" stroke-width="1.8"/></g>
<g transform="translate(617.80,113.50)"><path d="M1.5 1 H8 L10.8 3.8 V11.5 H1.5 Z" fill="#e8d6d2" stroke="#8c6c68" stroke-width="0.9"/><path d="M0.3 0.3 L12 12 M12 0.3 L0.3 12" stroke="#c4504a" stroke-width="1.5"/><rect x="4" y="4.5" width="4" height="4" fill="#d88" stroke="#a44" stroke-width="0.6"/></g>
<g transform="translate(634.00,113.50)"><g fill="url(#ck)" stroke="url(#ck)"><rect x="3" y="0.3" width="6" height="4"/><rect x="0" y="8" width="4.2" height="3.6"/><rect x="7.4" y="8" width="4.2" height="3.6"/><rect x="5.4" y="4" width="1.2" height="2.4"/><rect x="1.6" y="6" width="8.6" height="1.1"/><rect x="1.6" y="6" width="1.1" height="2.2"/><rect x="9.1" y="6" width="1.1" height="2.2"/></g></g>
<rect x="650.0" y="111.5" width="1" height="15" fill="#c5c2b0"/><rect x="651.0" y="111.5" width="0.8" height="15" fill="#fbfaf4"/>
<g transform="translate(655.80,113.50)"><path d="M0.5 0.5 H6.5 L9.3 3.3 V11.5 H0.5 Z" fill="#eef0ea" stroke="#5e6a5e" stroke-width="0.9"/><text x="2.2" y="9.6" font-size="7.4" font-weight="bold" fill="#3d5a42">S</text></g>
<g transform="translate(671.60,113.50)"><path d="M0.5 0.5 H6.5 L9.3 3.3 V11.5 H0.5 Z" fill="#dbe9f6" stroke="#5d7691" stroke-width="0.9"/><path d="M6 2.6 L2.8 6.6 H5 L3.6 10.2 L7.2 5.6 H4.9 Z" fill="#3f86d8"/></g>
<rect x="687.1" y="111.5" width="1" height="15" fill="#c5c2b0"/><rect x="688.1" y="111.5" width="0.8" height="15" fill="#fbfaf4"/>
<g transform="translate(692.60,113.30)"><rect x="0" y="0" width="12.5" height="11.4" rx="0.8" fill="#d8502a"/><rect x="0" y="9.2" width="12.5" height="2.2" fill="#f08a5a"/><text x="0.9" y="6.8" font-size="4.8" font-weight="bold" fill="#ffd8c4" textLength="10.6" lengthAdjust="spacingAndGlyphs">ARES</text></g>
<rect x="20.5" y="133" width="1" height="443" fill="#c5c2b0"/><rect x="21.5" y="133" width="0.8" height="443" fill="#fbfaf4"/>
<rect x="3" y="252.3" width="13" height="0.8" fill="#c5c2b0"/><rect x="3" y="387.2" width="13" height="0.8" fill="#c5c2b0"/>
<rect x="24" y="186" width="16" height="0.8" fill="#c5c2b0"/>
<rect x="2" y="131.6" width="16" height="1" fill="#c9c6b4"/><rect x="24" y="131.6" width="16" height="1" fill="#c9c6b4"/>
<rect x="20.5" y="58" width="1" height="15" fill="#c5c2b0"/>
<rect x="2" y="59" width="16" height="1" fill="#c9c6b4"/><rect x="24" y="59" width="16" height="1" fill="#c9c6b4"/>
<g transform="translate(8.5,161.3)"><rect x="-7" y="-8" width="16" height="16" fill="#fbfaf4" stroke="#c9c5b4" stroke-width="0.8" rx="1.5"/></g>
<g transform="translate(8.5,144.7)"><path d="M-3.2 -6 L-3.2 4.6 L-0.6 2.2 L1.2 6.2 L3 5.4 L1.3 1.5 L4.6 1.3 Z" fill="#1c1c1c"/></g>
<g transform="translate(8.5,161.3)"><path d="M-2.4 -4.6 L4 0 L-2.4 4.6 Z" fill="#d8cf6a" stroke="#7d7a30" stroke-width="0.9"/><path d="M-4.8 -2 H-2.4 M-4.8 2 H-2.4 M4 0 H5.4" stroke="#7d7a30" stroke-width="0.9"/></g>
<g transform="translate(8.5,178)"><path d="M0 -5.4 V5.4 M-5.4 0 H5.4" stroke="#2a62c8" stroke-width="1.6"/><rect x="-1.9" y="-1.9" width="3.8" height="3.8" fill="#1c3f8a"/></g>
<g transform="translate(8.5,194)"><rect x="-5.2" y="-3.8" width="11.2" height="7.4" fill="#dfe6f6" stroke="#6f86c0" stroke-width="0.7" stroke-dasharray="1.2 0.8"/><text x="-4.6" y="2.4" font-size="5.8" font-weight="bold" fill="#5a6fb0" letter-spacing="-0.3">LBL</text></g>
<g transform="translate(8.5,211)"><path d="M-4 -4.6 H5 M-4 -1.5 H5 M-4 1.6 H5 M-4 4.7 H5" stroke="#55554a" stroke-width="1.1" stroke-dasharray="2.6 0.7"/></g>
<g transform="translate(8.5,226)"><path d="M-5.4 0 H6" stroke="#2a62c8" stroke-width="2.2"/><path d="M-2.6 -4.6 V4.6 M3 -4.6 V4.6" stroke="#27427c" stroke-width="1.2"/></g>
<g transform="translate(8.5,243.5)"><rect x="-2.8" y="-6.2" width="6" height="12.4" fill="#cfc84e" stroke="#8a8530" stroke-width="0.9"/><path d="M-5.2 -3 H-2.8 M-5.2 3 H-2.8 M3.2 -3 H5.6 M3.2 3 H5.6" stroke="#8a8530" stroke-width="1.1"/></g>
<g transform="translate(8.5,263)"><rect x="-3.8" y="-6" width="8.6" height="4.4" rx="2" fill="#d3cb55" stroke="#8a8530" stroke-width="0.8"/><rect x="-3.8" y="1.2" width="8.6" height="4.4" rx="2" fill="#d3cb55" stroke="#8a8530" stroke-width="0.8"/><rect x="-1" y="-5" width="2.4" height="2.6" fill="#f4f1c0"/><rect x="-1" y="2.2" width="2.4" height="2.6" fill="#f4f1c0"/></g>
<g transform="translate(8.5,279.5)"><path d="M-2.5 -4.6 L5 0 L-2.5 4.6 Z" fill="#f4f2e6" stroke="#5a5a52" stroke-width="0.9"/><path d="M-6.5 0 H-2.5 M5 0 H7" stroke="#5a5a52" stroke-width="0.9" stroke-dasharray="1.4 1"/></g>
<g transform="translate(8.5,296)"><path d="M-5.5 -6 V5.5 H6.5" stroke="#6a3a2a" stroke-width="1.2" fill="none"/><path d="M-5 1 L-2 -4 L1 0.5 L4 -4 L6.5 -1" stroke="#2a58b8" stroke-width="1.1" fill="none"/><path d="M-5 3.5 Q-2 0 1 3 T6.5 2.5" stroke="#c04a3a" stroke-width="0.9" fill="none"/></g>
<g transform="translate(8.5,311)"><rect x="-5.6" y="-3.4" width="11.8" height="7" fill="#d5d6da" stroke="#484c58" stroke-width="1"/><rect x="-4" y="-1.6" width="3.4" height="3.2" fill="#5a5f6c"/><rect x="1" y="-1.6" width="3.4" height="3.2" fill="#5a5f6c"/></g>
<g transform="translate(8.5,328.8)"><circle cx="0" cy="0" r="5.8" fill="#4f8fd8" stroke="#2c57a0" stroke-width="1.1"/><path d="M-3.6 1.5 Q-1.8 -5 0 0 T3.6 -1.5" stroke="#eaf2ff" stroke-width="1.1" fill="none"/></g>
<g transform="translate(8.5,346)"><path d="M-5 5.5 L2.5 -2" stroke="#8c8a38" stroke-width="2.6" stroke-linecap="round"/><path d="M-5 5.5 L2.5 -2" stroke="#e6e08a" stroke-width="1" stroke-linecap="round"/><path d="M2.5 -2 Q6 -6.5 6.8 -1" stroke="#6a6a5a" stroke-width="1" fill="none"/><text x="-7" y="-2.6" font-size="5.4" font-weight="bold" fill="#33407a">V</text></g>
<g transform="translate(8.5,361.8)"><path d="M-5 5.5 L2.5 -2" stroke="#8c8a38" stroke-width="2.6" stroke-linecap="round"/><path d="M-5 5.5 L2.5 -2" stroke="#e6e08a" stroke-width="1" stroke-linecap="round"/><path d="M2.5 -2 Q6 -6.5 6.8 -1" stroke="#6a6a5a" stroke-width="1" fill="none"/><text x="-7" y="-2.6" font-size="5.4" font-weight="bold" fill="#33407a">I</text></g>
<g transform="translate(8.5,379)"><rect x="-5.8" y="-6" width="12" height="8" rx="1" fill="#eef0f2" stroke="#3e4450" stroke-width="1.1"/><path d="M-3.4 0.6 Q0.2 -5 3.8 0.6" stroke="#4a5060" stroke-width="0.9" fill="none"/><rect x="-4.4" y="2" width="9.2" height="4.6" fill="#9aa0aa" stroke="#3e4450" stroke-width="0.9"/><rect x="-2" y="3.2" width="4.4" height="2.2" fill="#e8eaee"/></g>
<g transform="translate(8.5,398)"><path d="M-5.5 6 L6.5 -6" stroke="#2e2e2a" stroke-width="1.5"/></g>
<g transform="translate(9.3,415)"><rect x="-5.4" y="-5.4" width="10.8" height="10.8" fill="#56a3a8" stroke="#2f6f78" stroke-width="0.9"/></g>
<g transform="translate(9,431.6)"><circle cx="0" cy="0" r="5.9" fill="#56a3a8" stroke="#2f6f78" stroke-width="0.9"/></g>
<g transform="translate(9,448)"><path d="M-4.5 -4.6 Q5 -4.6 5.2 4.6" fill="none" stroke="#55554c" stroke-width="1"/><path d="M-4.5 -4.6 V4.6 H5.2" fill="none" stroke="#8a8a80" stroke-width="0.8" stroke-dasharray="1.2 1"/></g>
<g transform="translate(9,464)"><circle cx="-2.2" cy="0.3" r="4.3" fill="#56a3a8" stroke="#2f6f78" stroke-width="0.9"/><circle cx="2.8" cy="-0.6" r="3.8" fill="#56a3a8" stroke="#2f6f78" stroke-width="0.9"/><circle cx="-2.2" cy="0.3" r="3.85" fill="#56a3a8"/></g>
<g transform="translate(9,481)"><text x="-5.6" y="5.2" font-size="15" font-weight="bold" style="font-family:Liberation Serif,serif" fill="#1a1a1a">A</text></g>
<g transform="translate(9,497)"><rect x="-5.5" y="-5.5" width="11" height="11" fill="#2e3a3a" stroke="#4f8f94" stroke-width="1"/><path d="M3.4 -3 H-3.2 V0 H3.4 V3.2 H-3.4" fill="none" stroke="#f0f4f4" stroke-width="1.5"/></g>
<g transform="translate(9,513.5)"><path d="M0 -5.4 V5.4 M-5.4 0 H5.4" stroke="#2f5a3a" stroke-width="1.2"/><rect x="-1.6" y="-1.6" width="3.2" height="3.2" fill="#1c3a24"/></g>
<g transform="translate(30.8,144.6)"><path d="M3 -2.6 A4 4 0 1 0 3.9 1.4" fill="none" stroke="#2c52a6" stroke-width="2.1"/><path d="M0.8 -5.2 H5.4 V-0.4 Z" fill="#2c52a6"/></g>
<g transform="translate(30.8,161.4)"><path d="M-3 -2.6 A4 4 0 1 1 -3.9 1.4" fill="none" stroke="#2c52a6" stroke-width="2.1"/><path d="M-0.8 -5.2 H-5.4 V-0.4 Z" fill="#2c52a6"/></g>
<g transform="translate(31,196.8)"><path d="M-6.5 0 L-3 -3.4 V-1.2 H3 V-3.4 L6.5 0 L3 3.4 V1.2 H-3 V3.4 Z" fill="#3f62ac" stroke="#27498c" stroke-width="0.5"/></g>
<g transform="translate(30.4,213.8)"><path d="M0 -6 L3.2 -2.6 H1.2 V2.6 H3.2 L0 6 L-3.2 2.6 H-1.2 V-2.6 H-3.2 Z" fill="#4a6eb8" stroke="#27498c" stroke-width="0.5"/></g>
<g fill="none" stroke="#161616" stroke-width="1.15"><path d="M71.3 160.5 V153.8 H79.4 V160.5 M79.4 155.2 L81.9 157.8 H89.4 V164.3 M63 169.3 H66.3 V163.4 L72 162.6 L71.3 160.5 L75 161.8 H83 M83.5 162 V168 M81.3 168 V177 M79.4 170 H82.6 V174.3 H79.4 Z M83.5 166 L86 168 V171 M89.4 164.3 V171 L92 172.6 H95 L97.5 169.3 L100.6 171.8 M91 162 H93.5"/></g><circle cx="83.6" cy="165" r="1.5" fill="#161616"/><circle cx="71.5" cy="154" r="0.9" fill="#161616"/><circle cx="81.5" cy="157.4" r="0.9" fill="#161616"/>
<g transform="translate(2,3.8)"><rect x="0" y="0.5" width="10.8" height="8.8" fill="#e0402e" stroke="#f4c8b8" stroke-width="0.6"/><text x="0.6" y="7" font-size="4.6" font-weight="bold" fill="#fff" textLength="9.6" lengthAdjust="spacingAndGlyphs">ARES</text></g>
<g transform="translate(2,77)"><rect x="0" y="0.5" width="10.8" height="8.8" fill="#2f5ed0" stroke="#9cc0f8" stroke-width="0.6"/><text x="0.8" y="7.2" font-size="5.6" font-weight="bold" fill="#fff" textLength="9.2" lengthAdjust="spacingAndGlyphs">ISIS</text></g>
</svg>
<!-- schematic -->
<svg class="abs" style="left:0;top:0" width="1024" height="576" viewBox="0 0 1024 576">
<defs><pattern id="hat" width="3" height="3" patternUnits="userSpaceOnUse" patternTransform="rotate(35)"><rect width="3" height="3" fill="#ecd9c8"/><rect width="1.3" height="3" fill="#b8564c"/></pattern></defs>
<path d="M370.50 326.50 L370.50 309.50 L458.50 309.50" fill="none" stroke="#3b6040" stroke-width="1"/>
<path d="M431.50 309.50 L431.50 222.50 L447.50 222.50" fill="none" stroke="#3b6040" stroke-width="1"/>
<path d="M447.50 222.50 L454.50 222.50" fill="none" stroke="#80463c" stroke-width="1"/><path d="M459.50 222.50 L467.50 222.50" fill="none" stroke="#80463c" stroke-width="1"/><path d="M454.50 213.50 L454.50 231.50" fill="none" stroke="#80463c" stroke-width="1.1"/><path d="M459.50 213.50 L459.50 231.50" fill="none" stroke="#80463c" stroke-width="1.1"/>
<path d="M467.50 222.50 L510.50 222.50" fill="none" stroke="#3b6040" stroke-width="1"/>
<path d="M510.50 222.50 L518.50 222.50" fill="none" stroke="#80463c" stroke-width="1"/><path d="M545.50 222.50 L553.50 222.50" fill="none" stroke="#80463c" stroke-width="1"/><rect x="518.5" y="218.5" width="27.0" height="8.0" fill="#c9b99b" stroke="#80463c" stroke-width="0.9"/>
<path d="M553.50 222.50 L570.50 222.50 L570.50 335.50" fill="none" stroke="#3b6040" stroke-width="1"/>
<path d="M452.50 309.50 L458.50 309.50" fill="none" stroke="#80463c" stroke-width="1"/><path d="M473.50 309.50 L480.50 309.50" fill="none" stroke="#80463c" stroke-width="1"/><rect x="458.5" y="300.5" width="5" height="18.0" fill="url(#hat)" stroke="#80463c" stroke-width="0.9"/><rect x="468.5" y="300.5" width="5" height="18.0" fill="#c9b99b" stroke="#80463c" stroke-width="0.9"/>
<path d="M480.50 309.50 L491.50 309.50 L491.50 335.50 L501.50 335.50" fill="none" stroke="#3b6040" stroke-width="1"/>
<path d="M501.50 335.50 L509.50 335.50" fill="none" stroke="#80463c" stroke-width="1"/><path d="M535.50 335.50 L544.50 335.50" fill="none" stroke="#80463c" stroke-width="1"/><rect x="509.5" y="331.5" width="26.0" height="8.0" fill="#c9b99b" stroke="#80463c" stroke-width="0.9"/>
<path d="M544.50 335.50 L570.50 335.50 L647.50 370.50" fill="none" stroke="#3b6040" stroke-width="1"/>
<path d="M570.50 256.50 L604.50 256.50" fill="none" stroke="#3b6040" stroke-width="1"/>
<path d="M604.50 256.50 L611.50 256.50" fill="none" stroke="#80463c" stroke-width="1"/><path d="M616.50 256.50 L624.50 256.50" fill="none" stroke="#80463c" stroke-width="1"/><path d="M611.50 247.50 L611.50 265.50" fill="none" stroke="#80463c" stroke-width="1.1"/><path d="M616.50 247.50 L616.50 265.50" fill="none" stroke="#80463c" stroke-width="1.1"/>
<path d="M624.50 256.50 L639.50 256.50 L639.50 291.50" fill="none" stroke="#3b6040" stroke-width="1"/>
<path d="M570.50 291.50 L579.50 291.50" fill="none" stroke="#3b6040" stroke-width="1"/>
<path d="M579.50 291.50 L588.50 291.50" fill="none" stroke="#80463c" stroke-width="1"/><path d="M614.50 291.50 L623.50 291.50" fill="none" stroke="#80463c" stroke-width="1"/><rect x="588.5" y="288.5" width="26.0" height="7.0" fill="#c9b99b" stroke="#80463c" stroke-width="0.9"/>
<path d="M623.50 291.50 L761.50 291.50" fill="none" stroke="#3b6040" stroke-width="1"/>
<path d="M761.25 288.5 L771.5 291.75 L761.25 295.25 Z" fill="#fff" stroke="#3b6040" stroke-width="1"/>
<text x="776.3" y="295" font-size="7" fill="#2c2c2c" font-weight="bold" >Out</text>
<path d="M725.50 291.50 L725.50 300.50 L744.50 300.50 L744.50 361.50 L712.50 361.50" fill="none" stroke="#3b6040" stroke-width="1"/>
<path d="M674.50 345.50 L674.50 327.50" fill="none" stroke="#80463c" stroke-width="1"/>
<path d="M674.50 327.50 L674.50 318.50 L778.50 318.50 L778.50 448.50 L796.50 448.50" fill="none" stroke="#3b6040" stroke-width="1"/>
<path d="M647.50 370.50 L665.50 370.50" fill="none" stroke="#80463c" stroke-width="1"/>
<path d="M647.50 353.50 L665.50 353.50" fill="none" stroke="#80463c" stroke-width="1"/>
<path d="M700.50 361.50 L712.50 361.50" fill="none" stroke="#80463c" stroke-width="1"/>
<path d="M674.50 378.50 L674.50 396.50" fill="none" stroke="#80463c" stroke-width="1"/>
<path d="M665.5 340 L700 361.5 L665.5 383 Z" fill="#bfb896" stroke="#80463c" stroke-width="0.9"/>
<path d="M669.50 353.50 L675.50 353.50" fill="none" stroke="#b04038" stroke-width="1"/>
<path d="M672.50 350.50 L672.50 356.50" fill="none" stroke="#b04038" stroke-width="1"/>
<path d="M669.50 370.50 L675.50 370.50" fill="none" stroke="#b04038" stroke-width="1"/>
<text x="701.3" y="327.5" font-size="9.7" fill="#3a3a3a" font-weight="normal" >U2</text>
<text x="653.2" y="351.6" font-size="8.4" fill="#222" font-weight="normal" >1</text>
<text x="652.6" y="368.8" font-size="8.4" fill="#222" font-weight="normal" >2</text>
<text x="708.2" y="360.2" font-size="8.4" fill="#222" font-weight="normal" >4</text>
<text x="0" y="0" font-size="8.4" fill="#222" font-weight="normal" transform="translate(672.6,335.6) rotate(-90)">5</text>
<text x="0" y="0" font-size="8.4" fill="#222" font-weight="normal" transform="translate(672.6,391.3) rotate(-90)">3</text>
<text x="701.4" y="399.3" font-size="7.1" fill="#2c2c2c" font-weight="bold" letter-spacing="0.05">TDA2003</text>
<text x="702.6" y="408" font-size="6.7" fill="#9a9a9a" font-weight="normal" letter-spacing="0.15">&lt;TEXT&gt;</text>
<path d="M647.50 353.50 L630.50 353.50 L630.50 370.50 L639.50 370.50 L639.50 422.50 L656.50 422.50 L656.50 430.50 L691.50 430.50 L691.50 448.50 L683.50 448.50" fill="none" stroke="#3b6040" stroke-width="1"/>
<path d="M639.50 448.50 L647.50 448.50" fill="none" stroke="#80463c" stroke-width="1"/><path d="M675.50 448.50 L683.50 448.50" fill="none" stroke="#80463c" stroke-width="1"/><rect x="647.5" y="444.5" width="28.0" height="7.0" fill="#c9b99b" stroke="#80463c" stroke-width="0.9"/>
<path d="M639.50 448.50 L614.50 448.50 L614.50 430.50 L605.50 430.50" fill="none" stroke="#3b6040" stroke-width="1"/>
<path d="M674.50 396.50 L674.50 405.50 L700.50 405.50 L700.50 499.50" fill="none" stroke="#3b6040" stroke-width="1"/>
<path d="M696.25 499.5 L704.25 499.5 L700.25 510.75 Z" fill="#fff" stroke="#3b6040" stroke-width="1"/>
<text x="691.3" y="522" font-size="7" fill="#2c2c2c" font-weight="bold" >-12v</text>
<path d="M778.50 352.50 L823.50 352.50" fill="none" stroke="#3b6040" stroke-width="1"/>
<path d="M831.25 348.75 L831.25 356.25 L823.5 352.5 Z" fill="#fff" stroke="#3b6040" stroke-width="1"/>
<text x="834.3" y="355.8" font-size="7" fill="#2c2c2c" font-weight="bold" >+12v</text>
<path d="M317.50 439.50 L361.50 439.50 L361.50 361.50 L380.50 361.50" fill="none" stroke="#3b6040" stroke-width="1"/>
<path d="M309.5 435.75 L317.5 439.5 L309.5 443.25 Z" fill="#fff" stroke="#3b6040" stroke-width="1"/>
<text x="289.5" y="443" font-size="6.8" fill="#2c2c2c" font-weight="bold" >input</text>
<path d="M380.50 361.50 L386.50 361.50" fill="none" stroke="#80463c" stroke-width="1"/><path d="M390.50 361.50 L397.50 361.50" fill="none" stroke="#80463c" stroke-width="1"/><path d="M386.50 352.50 L386.50 370.50" fill="none" stroke="#80463c" stroke-width="1.1"/><path d="M390.50 352.50 L390.50 370.50" fill="none" stroke="#80463c" stroke-width="1.1"/>
<path d="M397.50 361.50 L423.50 361.50" fill="none" stroke="#3b6040" stroke-width="1"/>
<path d="M423.50 361.50 L431.50 361.50" fill="none" stroke="#80463c" stroke-width="1"/><path d="M458.50 361.50 L466.50 361.50" fill="none" stroke="#80463c" stroke-width="1"/><rect x="431.5" y="357.5" width="27.0" height="8.0" fill="#c9b99b" stroke="#80463c" stroke-width="0.9"/>
<path d="M466.50 361.50 L605.50 361.50 L605.50 465.50" fill="none" stroke="#3b6040" stroke-width="1"/>
<path d="M605.50 517.50 L605.50 526.50 L614.50 526.50 L614.50 560.50" fill="none" stroke="#3b6040" stroke-width="1"/>
<path d="M570.50 474.50 L570.50 465.50 L630.50 465.50 L630.50 481.50" fill="none" stroke="#3b6040" stroke-width="1"/>
<path d="M570.50 474.50 L570.50 482.50" fill="none" stroke="#80463c" stroke-width="1"/><path d="M570.50 508.50 L570.50 517.50" fill="none" stroke="#80463c" stroke-width="1"/><rect x="567.5" y="482.5" width="7.0" height="26.0" fill="#c9b99b" stroke="#80463c" stroke-width="0.9"/>
<path d="M570.50 517.50 L570.50 526.50 L596.50 526.50 L596.50 517.50 L630.50 517.50 L630.50 501.50" fill="none" stroke="#3b6040" stroke-width="1"/>
<path d="M630.50 481.50 L630.50 489.50" fill="none" stroke="#80463c" stroke-width="1"/><path d="M630.50 493.50 L630.50 501.50" fill="none" stroke="#80463c" stroke-width="1"/><path d="M621.50 489.50 L639.50 489.50" fill="none" stroke="#80463c" stroke-width="1.1"/><path d="M621.50 493.50 L639.50 493.50" fill="none" stroke="#80463c" stroke-width="1.1"/>
<rect x="605.5" y="560.25" width="17" height="2.4" fill="#d9e4d6" stroke="#3b6040" stroke-width="0.9"/><path d="M610.10 562.75 L604.50 570.35" stroke="#3b6040" stroke-width="1.15" fill="none"/><path d="M613.80 562.75 L608.20 570.35" stroke="#3b6040" stroke-width="1.15" fill="none"/><path d="M617.50 562.75 L611.90 570.35" stroke="#3b6040" stroke-width="1.15" fill="none"/><path d="M621.20 562.75 L615.60 570.35" stroke="#3b6040" stroke-width="1.15" fill="none"/><path d="M624.90 562.75 L619.30 570.35" stroke="#3b6040" stroke-width="1.15" fill="none"/>
<path d="M700.50 465.50 L709.50 465.50" fill="none" stroke="#3b6040" stroke-width="1"/>
<path d="M709.50 465.50 L717.50 465.50" fill="none" stroke="#80463c" stroke-width="1"/><path d="M744.50 465.50 L753.50 465.50" fill="none" stroke="#80463c" stroke-width="1"/><rect x="717.5" y="462.5" width="27.0" height="7.0" fill="#c9b99b" stroke="#80463c" stroke-width="0.9"/>
<path d="M753.50 465.50 L761.50 465.50 L761.50 508.50 L781.50 508.50" fill="none" stroke="#3b6040" stroke-width="1"/>
<path d="M781.50 508.50 L788.50 508.50" fill="none" stroke="#80463c" stroke-width="1"/><path d="M803.50 508.50 L810.50 508.50" fill="none" stroke="#80463c" stroke-width="1"/><rect x="788.5" y="499.5" width="5" height="18.0" fill="#c9b99b" stroke="#80463c" stroke-width="0.9"/><rect x="798.5" y="499.5" width="5" height="18.0" fill="url(#hat)" stroke="#80463c" stroke-width="0.9"/>
<path d="M810.50 508.50 L816.50 508.50" fill="none" stroke="#3b6040" stroke-width="1"/>
<path d="M816.50 508.50 L823.50 508.50" fill="none" stroke="#80463c" stroke-width="1"/><path d="M838.50 508.50 L845.50 508.50" fill="none" stroke="#80463c" stroke-width="1"/><rect x="823.5" y="499.5" width="5" height="18.0" fill="#c9b99b" stroke="#80463c" stroke-width="0.9"/><rect x="833.5" y="499.5" width="5" height="18.0" fill="url(#hat)" stroke="#80463c" stroke-width="0.9"/>
<path d="M845.50 508.50 L865.50 508.50 L865.50 448.50" fill="none" stroke="#3b6040" stroke-width="1"/>
<path d="M796.50 448.50 L804.50 448.50" fill="none" stroke="#80463c" stroke-width="1"/><path d="M831.50 448.50 L840.50 448.50" fill="none" stroke="#80463c" stroke-width="1"/><rect x="804.5" y="445.5" width="27.0" height="7.0" fill="#c9b99b" stroke="#80463c" stroke-width="0.9"/>
<path d="M840.50 448.50 L883.50 448.50" fill="none" stroke="#3b6040" stroke-width="1"/>
<path d="M883.50 448.50 L891.50 448.50" fill="none" stroke="#80463c" stroke-width="1"/>
<path d="M900.50 448.50 L909.50 448.50" fill="none" stroke="#80463c" stroke-width="1"/>
<path d="M900.5 440 L900.5 457 L891.25 448.75 Z" fill="#c9b99b" stroke="#80463c" stroke-width="0.9"/>
<path d="M891.50 440.50 L891.50 457.50" fill="none" stroke="#80463c" stroke-width="1.2"/>
<path d="M909.50 448.50 L935.50 448.50 L935.50 482.50" fill="none" stroke="#3b6040" stroke-width="1"/>
<rect x="926.0" y="482.0" width="18" height="2.4" fill="#d9e4d6" stroke="#3b6040" stroke-width="0.9"/><path d="M930.60 484.50 L925.00 492.10" stroke="#3b6040" stroke-width="1.15" fill="none"/><path d="M934.30 484.50 L928.70 492.10" stroke="#3b6040" stroke-width="1.15" fill="none"/><path d="M938.00 484.50 L932.40 492.10" stroke="#3b6040" stroke-width="1.15" fill="none"/><path d="M941.70 484.50 L936.10 492.10" stroke="#3b6040" stroke-width="1.15" fill="none"/><path d="M945.40 484.50 L939.80 492.10" stroke="#3b6040" stroke-width="1.15" fill="none"/>
<rect x="361.5" y="326.0" width="18" height="2.4" fill="#d9e4d6" stroke="#3b6040" stroke-width="0.9"/><path d="M366.10 328.50 L360.50 336.10" stroke="#3b6040" stroke-width="1.15" fill="none"/><path d="M369.80 328.50 L364.20 336.10" stroke="#3b6040" stroke-width="1.15" fill="none"/><path d="M373.50 328.50 L367.90 336.10" stroke="#3b6040" stroke-width="1.15" fill="none"/><path d="M377.20 328.50 L371.60 336.10" stroke="#3b6040" stroke-width="1.15" fill="none"/><path d="M380.90 328.50 L375.30 336.10" stroke="#3b6040" stroke-width="1.15" fill="none"/>
<circle cx="431.5" cy="309.5" r="2.1" fill="#143214"/>
<circle cx="570.5" cy="256.5" r="2.1" fill="#143214"/>
<circle cx="570.5" cy="291.5" r="2.1" fill="#143214"/>
<circle cx="570.5" cy="335.5" r="2.1" fill="#143214"/>
<circle cx="639.5" cy="291.5" r="2.1" fill="#143214"/>
<circle cx="725.5" cy="291.5" r="2.1" fill="#143214"/>
<circle cx="778.5" cy="352.5" r="2.1" fill="#143214"/>
<circle cx="605.5" cy="430.5" r="2.1" fill="#143214"/>
<circle cx="605.5" cy="465.5" r="2.1" fill="#143214"/>
<circle cx="605.5" cy="517.5" r="2.1" fill="#143214"/>
<circle cx="700.5" cy="465.5" r="2.1" fill="#143214"/>
<circle cx="865.5" cy="448.5" r="2.1" fill="#143214"/>
<circle cx="865.5" cy="508.5" r="2.1" fill="#143214"/>
<circle cx="935.5" cy="448.5" r="2.1" fill="#143214"/>
<g stroke="#4a58c8" stroke-width="1" fill="none"><circle cx="752.3" cy="457" r="3"/><path d="M747 457 H757.6 M752.3 451.7 V462.3"/></g>
<text x="518" y="215" font-size="9.7" fill="#3a3a3a" font-weight="normal" >R7</text>
<text x="517.4" y="233.8" font-size="7.1" fill="#2c2c2c" font-weight="bold" letter-spacing="0.05">470</text>
<text x="518.1" y="241.8" font-size="6.7" fill="#9a9a9a" font-weight="normal" letter-spacing="0.15">&lt;TEXT&gt;</text>
<text x="447.4" y="239.3" font-size="7.1" fill="#2c2c2c" font-weight="bold" letter-spacing="0.05">103</text>
<text x="447.6" y="247.5" font-size="6.7" fill="#9a9a9a" font-weight="normal" letter-spacing="0.15">&lt;TEXT&gt;</text>
<text x="457" y="297.5" font-size="9.7" fill="#3a3a3a" font-weight="normal" >C1</text>
<text x="456.9" y="325.8" font-size="7.1" fill="#2c2c2c" font-weight="bold" letter-spacing="0.05">1n</text>
<text x="457.6" y="333.8" font-size="6.7" fill="#9a9a9a" font-weight="normal" letter-spacing="0.15">&lt;TEXT&gt;</text>
<text x="508.8" y="328.8" font-size="9.7" fill="#3a3a3a" font-weight="normal" >R8</text>
<text x="508.9" y="346.3" font-size="7.1" fill="#2c2c2c" font-weight="bold" letter-spacing="0.05">1k5</text>
<text x="510.1" y="354.5" font-size="6.7" fill="#9a9a9a" font-weight="normal" letter-spacing="0.15">&lt;TEXT&gt;</text>
<text x="600.6999999999999" y="273.8" font-size="7.1" fill="#2c2c2c" font-weight="bold" letter-spacing="0.05">15</text>
<text x="605.6" y="283" font-size="6.7" fill="#9a9a9a" font-weight="normal" letter-spacing="0.15">&lt;TEXT&gt;</text>
<text x="587" y="285" font-size="9.7" fill="#3a3a3a" font-weight="normal" >R6</text>
<text x="586.4" y="303" font-size="7.1" fill="#2c2c2c" font-weight="bold" letter-spacing="0.05">22k</text>
<text x="587.6" y="311.3" font-size="6.7" fill="#9a9a9a" font-weight="normal" letter-spacing="0.15">&lt;TEXT&gt;</text>
<text x="378" y="349.5" font-size="9.7" fill="#3a3a3a" font-weight="normal" >C8</text>
<text x="378.7" y="377.5" font-size="7.1" fill="#2c2c2c" font-weight="bold" letter-spacing="0.05">101</text>
<text x="379.6" y="386.3" font-size="6.7" fill="#9a9a9a" font-weight="normal" letter-spacing="0.15">&lt;TEXT&gt;</text>
<text x="430.8" y="355" font-size="9.7" fill="#3a3a3a" font-weight="normal" >R4</text>
<text x="429.9" y="372.5" font-size="7.1" fill="#2c2c2c" font-weight="bold" letter-spacing="0.05">470</text>
<text x="431.6" y="381.3" font-size="6.7" fill="#9a9a9a" font-weight="normal" letter-spacing="0.15">&lt;TEXT&gt;</text>
<text x="647.5" y="441.8" font-size="9.7" fill="#3a3a3a" font-weight="normal" >R2</text>
<text x="646.9" y="460" font-size="7.1" fill="#2c2c2c" font-weight="bold" letter-spacing="0.05">100</text>
<text x="648.6" y="468.3" font-size="6.7" fill="#9a9a9a" font-weight="normal" letter-spacing="0.15">&lt;TEXT&gt;</text>
<text x="717" y="458.5" font-size="9.7" fill="#3a3a3a" font-weight="normal" >R9</text>
<text x="716.4" y="476.5" font-size="7.1" fill="#2c2c2c" font-weight="bold" letter-spacing="0.05">470</text>
<text x="717.6" y="485" font-size="6.7" fill="#9a9a9a" font-weight="normal" letter-spacing="0.15">&lt;TEXT&gt;</text>
<text x="578.8" y="491.3" font-size="9.7" fill="#3a3a3a" font-weight="normal" >R3</text>
<text x="578.1999999999999" y="501.5" font-size="7.1" fill="#2c2c2c" font-weight="bold" letter-spacing="0.05">22k</text>
<text x="586.6" y="501.5" font-size="6.7" fill="#9a9a9a" font-weight="normal" letter-spacing="0.15">&lt;TEXT&gt;</text>
<text x="644.5" y="491.3" font-size="9.7" fill="#3a3a3a" font-weight="normal" >C7</text>
<text x="643.9" y="501.5" font-size="7.1" fill="#2c2c2c" font-weight="bold" letter-spacing="0.05">10</text>
<text x="651.6" y="501.5" font-size="6.7" fill="#9a9a9a" font-weight="normal" letter-spacing="0.15">&lt;TEXT&gt;</text>
<text x="803.8" y="441.8" font-size="9.7" fill="#3a3a3a" font-weight="normal" >R10</text>
<text x="803.1999999999999" y="459.3" font-size="7.1" fill="#2c2c2c" font-weight="bold" letter-spacing="0.05">510</text>
<text x="805.1" y="468" font-size="6.7" fill="#9a9a9a" font-weight="normal" letter-spacing="0.15">&lt;TEXT&gt;</text>
<text x="891" y="436.3" font-size="9.7" fill="#3a3a3a" font-weight="normal" >D1</text>
<text x="890.4" y="465" font-size="7.1" fill="#2c2c2c" font-weight="bold" letter-spacing="0.05">1N5374BRL</text>
<text x="891.6" y="473.3" font-size="6.7" fill="#9a9a9a" font-weight="normal" letter-spacing="0.15">&lt;TEXT&gt;</text>
<text x="786.8" y="496.3" font-size="9.7" fill="#3a3a3a" font-weight="normal" >C2</text>
<text x="785.4" y="525" font-size="7.1" fill="#2c2c2c" font-weight="bold" letter-spacing="0.05">47n</text>
<text x="787.9" y="533.8" font-size="6.7" fill="#9a9a9a" font-weight="normal" letter-spacing="0.15">&lt;TEXT&gt;</text>
<text x="821.3" y="496.3" font-size="9.7" fill="#3a3a3a" font-weight="normal" >C3</text>
<text x="820.4" y="525" font-size="7.1" fill="#2c2c2c" font-weight="bold" letter-spacing="0.05">47n</text>
<text x="822.4" y="533.8" font-size="6.7" fill="#9a9a9a" font-weight="normal" letter-spacing="0.15">&lt;TEXT&gt;</text>
</svg>
</body></html>
